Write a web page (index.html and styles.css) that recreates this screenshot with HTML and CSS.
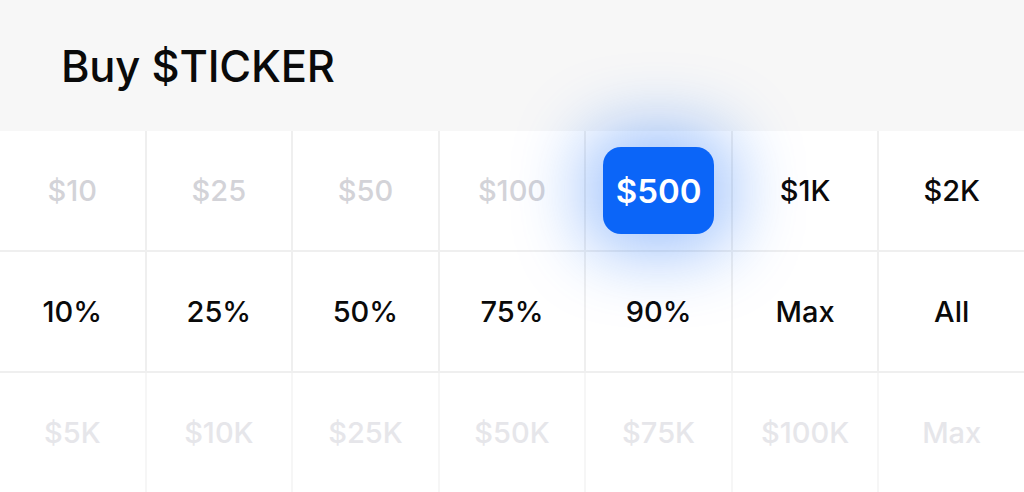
FILE: index.html
```html
<!DOCTYPE html>
<html lang="en">
<head>
    <meta charset="UTF-8">
    <meta name="viewport" content="width=device-width, initial-scale=1.0">
    <title>Buy $TICKER</title>
    <link rel="stylesheet" href="styles.css">
</head>
<body>
    <div class="header">
        <h1 class="title">Buy $TICKER</h1>
    </div>

    <div class="amount-grid">
        <button class="amount-btn disabled">$10</button>
        <button class="amount-btn disabled">$25</button>
        <button class="amount-btn disabled">$50</button>
        <button class="amount-btn disabled">$100</button>
        <button class="amount-btn selected"><span class="pill">$500</span></button>
        <button class="amount-btn">$1K</button>
        <button class="amount-btn">$2K</button>

        <button class="amount-btn">10%</button>
        <button class="amount-btn">25%</button>
        <button class="amount-btn">50%</button>
        <button class="amount-btn">75%</button>
        <button class="amount-btn">90%</button>
        <button class="amount-btn">Max</button>
        <button class="amount-btn">All</button>

        <button class="amount-btn faded">$5K</button>
        <button class="amount-btn faded">$10K</button>
        <button class="amount-btn faded">$25K</button>
        <button class="amount-btn faded">$50K</button>
        <button class="amount-btn faded">$75K</button>
        <button class="amount-btn faded">$100K</button>
        <button class="amount-btn faded">Max</button>
    </div>
</body>
</html>
```

FILE: styles.css
```css
* {
    box-sizing: border-box;
    margin: 0;
    padding: 0;
    font-family: Inter, 'Noto Sans', sans-serif;
}

body {
    background-color: #fff;
    color: #0a0a0a;
    width: 1024px;
    height: 492px;
    overflow: hidden;
}

.header {
    height: 131px;
    background-color: #f7f7f7;
    display: flex;
    align-items: center;
    padding-left: 61px;
}

.title {
    font-size: 43.5px;
    font-weight: 500;
    letter-spacing: -0.2px;
    color: #0a0a0a;
}

.amount-grid {
    display: grid;
    grid-template-columns: repeat(7, 1fr);
    grid-auto-rows: 119px;
    gap: 2px;
    padding-bottom: 2px;
    /* last row has lighter lines */
    background: linear-gradient(#efefef 0 242px, #f6f6f6 242px);
}

.amount-btn {
    background-color: #fff;
    border: none;
    display: flex;
    justify-content: center;
    align-items: center;
    font-size: 29px;
    font-weight: 500;
    color: #0a0a0a;
    cursor: pointer;
}

.amount-btn.disabled {
    color: #d3d3d8;
}

.amount-btn.faded {
    color: #e6e6ea;
}

.amount-btn.selected {
    position: relative;
    z-index: 1;
}

.pill {
    width: 111px;
    height: 87px;
    border-radius: 18px;
    background-color: #0b65f8;
    color: #fff;
    font-size: 33px;
    font-weight: 600;
    display: flex;
    justify-content: center;
    align-items: center;
    box-shadow: 0 0 70px 18px rgba(11, 101, 248, 0.4);
}
```
